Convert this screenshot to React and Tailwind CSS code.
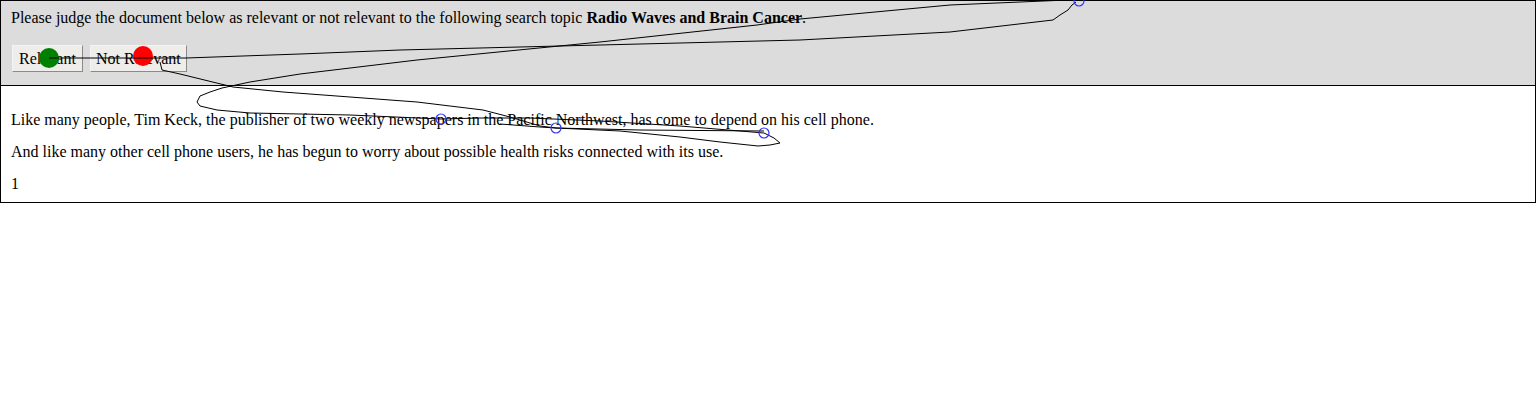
import React from 'react';

const serif = { fontFamily: '"Liberation Serif", "Times New Roman", serif' };

// mouse trail drawn over the page
const Trail = () => (
  <svg className="absolute left-0 top-0 pointer-events-none" width="1536" height="400" viewBox="0 0 1536 400">
    <circle cx="49" cy="58" r="10" fill="#008000" />
    <circle cx="143" cy="56" r="10" fill="#ff0000" />
    <g fill="none" stroke="#000" strokeWidth="1" strokeLinejoin="round">
      <polyline points="49,58 120,58 186,58 300,54 400,50 600,45 800,40 950,32 1053,20 1060,15 1068,10 1072,5 1076,2" />
      <polyline points="1067,0 950,5 800,19 757,25 600,42 417,60 300,74 250,82 222,88 210,92 200,96 197,102 200,106 217,110 250,113 350,115 441,119 480,118 530,118 600,121 680,126 764,133 774,138 780,143 770,145 758,146 720,142 680,137 620,131 556,128 540,127 500,124" />
      <polyline points="160,62 162,70 180,74 233,87 283,92 350,97 417,102 483,110 510,117 540,126 556,128 640,130 764,131" />
    </g>
    <g fill="none" stroke="#3333ff" strokeWidth="1.2">
      <circle cx="1079" cy="1" r="5" />
      <circle cx="441" cy="119" r="5" />
      <circle cx="556" cy="128" r="5" />
      <circle cx="764" cy="133" r="5" />
    </g>
  </svg>
);

export default function App() {
  return (
    <div className="relative w-[1536px] text-[16px] leading-[18px] text-black" style={serif}>
      <div className="border border-black">
        <div className="bg-[#dcdcdc] border-b border-black pl-[10px] pt-[8px] pb-[13px]">
          <p>
            Please judge the document below as relevant or not relevant to the following search topic{' '}
            <b>Radio Waves and Brain Cancer</b>.
          </p>
          <div className="flex gap-[7px] mt-[18px] ml-[1px]">
            <button className="h-[27px] px-[6px] bg-[#efedea] border border-t-[#f4f4f4] border-l-[#f4f4f4] border-r-[#8a8a8a] border-b-[#8a8a8a]">
              Relevant
            </button>
            <button className="h-[27px] px-[5px] bg-[#efedea] border border-t-[#f4f4f4] border-l-[#f4f4f4] border-r-[#8a8a8a] border-b-[#8a8a8a]">
              Not Relevant
            </button>
          </div>
        </div>
        <div className="bg-white pl-[10px] pt-[25px] pb-[9px]">
          <p>Like many people, Tim Keck, the publisher of two weekly newspapers in the Pacific Northwest, has come to depend on his cell phone.</p>
          <p className="mt-[14px]">And like many other cell phone users, he has begun to worry about possible health risks connected with its use.</p>
          <div className="mt-[14px]">1</div>
        </div>
      </div>
      <Trail />
    </div>
  );
}
